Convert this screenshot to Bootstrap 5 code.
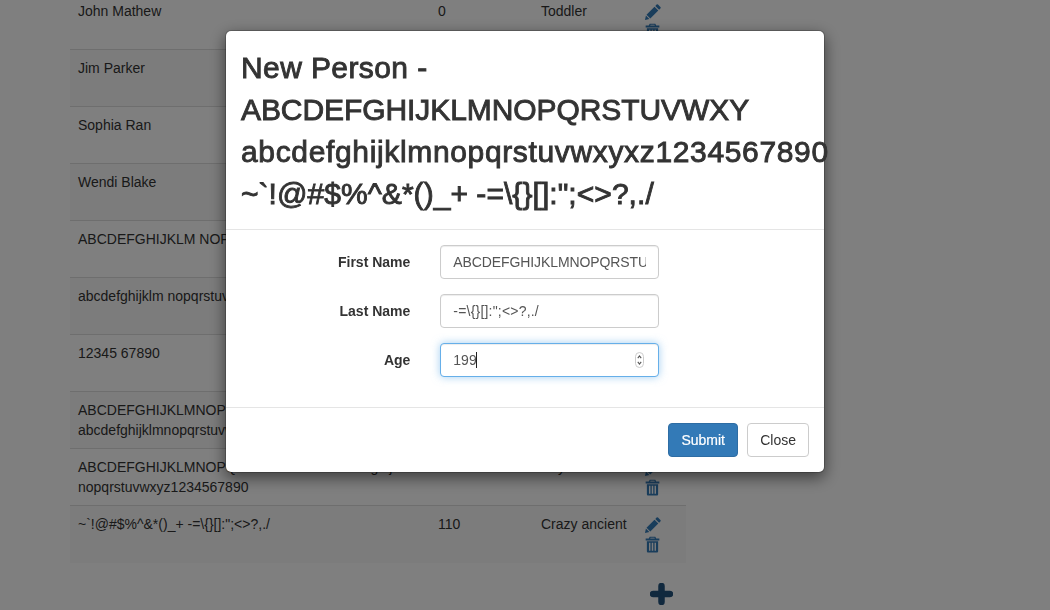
<!DOCTYPE html>
<html lang="en">
<head>
    <meta charset="UTF-8">
    <meta name="viewport" content="width=device-width, initial-scale=1.0">
    <title>People</title>
    <link href="https://cdn.jsdelivr.net/npm/bootstrap@5.3.0/dist/css/bootstrap.min.css" rel="stylesheet">
    <style>
        html, body {
            overflow: hidden;
            height: 610px;
        }
        body {
            font-family: "Liberation Sans", Arial, sans-serif;
            font-size: 14px;
            line-height: 20px;
            color: #333;
            background-color: #fff;
        }
        .people-wrap {
            width: 616px;
            margin: -8px 0 0 70px;
        }
        .people-table {
            width: 100%;
            table-layout: fixed;
            border-collapse: collapse;
        }
        .people-table td {
            padding: 8px;
            border-top: 1px solid #ddd;
            vertical-align: top;
            height: 57px;
        }
        .people-table tr:nth-child(even) td {
            background-color: #f9f9f9;
        }
        .col-name { width: 360px; }
        .col-age { width: 103px; }
        .col-kind { width: 103px; }
        .col-acts { width: 50px; }
        .act-link {
            display: block;
            height: 20px;
            padding: 3px 0 0 1px;
            color: #337ab7;
            line-height: 0;
        }
        .act-link + .act-link {
            padding-top: 2px;
        }
        .add-row {
            padding: 20px 0 0 580px;
            line-height: 0;
            color: #23527c;
        }
        .person-dialog.modal-dialog {
            width: 600px;
            max-width: 600px;
            margin: 30px auto;
        }
        .person-dialog .modal-content {
            border: 1px solid rgba(0,0,0,.2);
            border-radius: 6px;
            box-shadow: 0 5px 15px rgba(0,0,0,.5);
        }
        .person-dialog .modal-header {
            display: block;
            padding: 15px;
            border-bottom: 1px solid #e5e5e5;
        }
        .person-title {
            margin: 1px 0 -1px;
            font-family: "Liberation Sans", Arial, sans-serif;
            font-size: 30px;
            line-height: 42px;
            font-weight: 400;
            color: #333;
            -webkit-text-stroke: .9px #333;
        }
        .title-line {
            display: block;
            white-space: nowrap;
        }
        .title-line-1 { letter-spacing: .4px; }
        .title-line-2 { letter-spacing: -.08px; }
        .title-line-3 { letter-spacing: .65px; }
        .title-line-4 { letter-spacing: .05px; }
        .person-dialog .modal-body {
            padding: 15px;
        }
        .person-row {
            --bs-gutter-x: 30px;
            margin-bottom: 15px;
        }
        .person-label {
            padding-top: 7px;
            text-align: right;
            font-weight: 700;
        }
        .person-input {
            height: 34px;
            padding: 6px 12px;
            font-size: 14px;
            line-height: 20px;
            color: #555;
            border: 1px solid #ccc;
            border-radius: 4px;
            box-shadow: inset 0 1px 1px rgba(0,0,0,.075);
        }
        #firstName { letter-spacing: -.1px; }
        #lastName { letter-spacing: .2px; }
        .person-input.is-focused {
            border-color: #66afe9;
            box-shadow: inset 0 1px 1px rgba(0,0,0,.075), 0 0 8px rgba(102,175,233,.6);
            caret-color: transparent;
        }
        .age-caret {
            position: absolute;
            left: 51px;
            top: 9px;
            width: 1px;
            height: 16px;
            background-color: #222;
        }
        .age-spin {
            position: absolute;
            right: 30px;
            top: 9px;
        }
        .person-dialog .modal-footer {
            padding: 15px;
            gap: 9px;
            border-top: 1px solid #e5e5e5;
        }
        .person-dialog .modal-footer .btn {
            margin: 0;
            height: 34px;
            padding: 6px 12px;
            font-size: 14px;
            line-height: 20px;
            border-radius: 4px;
        }
        .btn-submit {
            width: 70px;
            color: #fff;
            background-color: #337ab7;
            border: 1px solid #2e6da4;
            -webkit-text-stroke: .2px #fff;
        }
        .btn-close-plain {
            color: #333;
            background-color: #fff;
            border: 1px solid #ccc;
        }
    </style>
</head>
<body>
    <!-- Table behind the dialog -->
    <div class="people-wrap">
        <table class="people-table">
            <colgroup>
                <col class="col-name"><col class="col-age"><col class="col-kind"><col class="col-acts">
            </colgroup>
            <tbody id="peopleBody"></tbody>
        </table>
        <div class="add-row">
            <svg width="23" height="22" viewBox="0 0 23 22"><path d="M11.500 3v16M3 11h17" stroke="currentColor" stroke-width="6.500" stroke-linecap="round" fill="none"/></svg>
        </div>
    </div>

    <!-- Modal -->
    <div class="modal-backdrop show"></div>
    <div class="modal show d-block" tabindex="-1">
        <div class="modal-dialog person-dialog">
            <div class="modal-content">
                <div class="modal-header">
                    <h4 class="person-title">
                        <span class="title-line title-line-1">New Person -</span>
                        <span class="title-line title-line-2">ABCDEFGHIJKLMNOPQRSTUVWXY</span>
                        <span class="title-line title-line-3">abcdefghijklmnopqrstuvwxyxz1234567890</span>
                        <span class="title-line title-line-4">~`!@#$%^&amp;*()_+ -=\{}[]:";&lt;&gt;?,./</span>
                    </h4>
                </div>
                <div class="modal-body">
                    <form>
                        <div class="row person-row">
                            <label class="col-4 person-label" for="firstName">First Name</label>
                            <div class="col-5">
                                <input type="text" class="form-control person-input" id="firstName" value="ABCDEFGHIJKLMNOPQRSTUVWXYZ">
                            </div>
                        </div>
                        <div class="row person-row">
                            <label class="col-4 person-label" for="lastName">Last Name</label>
                            <div class="col-5">
                                <input type="text" class="form-control person-input" id="lastName" value="-=\{}[]:&quot;;&lt;&gt;?,./">
                            </div>
                        </div>
                        <div class="row person-row">
                            <label class="col-4 person-label" for="age">Age</label>
                            <div class="col-5 position-relative">
                                <input type="text" class="form-control person-input is-focused" id="age" value="199">
                                <span class="age-caret" id="ageCaret"></span>
                                <svg class="age-spin" width="9" height="16" viewBox="0 0 9 16"><rect x=".5" y=".5" width="8" height="15" rx="4" fill="#fff" stroke="#ccc"/><path d="M2.800 6.200 4.500 4l1.700 2.200M2.800 9.800 4.500 12l1.700-2.200" fill="none" stroke="#555" stroke-width="1.100"/></svg>
                            </div>
                        </div>
                    </form>
                </div>
                <div class="modal-footer">
                    <button type="button" class="btn btn-submit">Submit</button>
                    <button type="button" class="btn btn-close-plain">Close</button>
                </div>
            </div>
        </div>
    </div>

    <script src="https://cdn.jsdelivr.net/npm/bootstrap@5.3.0/dist/js/bootstrap.bundle.min.js"></script>
    <script>
        const people = [
            ['John Mathew', 0, 'Toddler'],
            ['Jim Parker', 25, 'Adult'],
            ['Sophia Ran', 16, 'Teen'],
            ['Wendi Blake', 40, 'Adult'],
            ['ABCDEFGHIJKLM NOPQRSTUVWXYZ', 9, 'Child'],
            ['abcdefghijklm nopqrstuvwxyz', 9, 'Child'],
            ['12345 67890', 99, 'Old'],
            ['ABCDEFGHIJKLMNOPQRSTUVWXYZ abcdefghijklmnopqrstuvwxyz', 60, 'Senior'],
            ['ABCDEFGHIJKLMNOPQRSTUVWXYZ abcdefghijklm nopqrstuvwxyz1234567890', 5, 'Boy'],
            ['~`!@#$%^&*()_+ -=\\{}[]:";<>?,./', 110, 'Crazy ancient']
        ];

        const pencil = '<svg width="16" height="16" viewBox="0 0 16 16" fill="currentColor"><path d="M11.600.6a1 1 0 0 1 1.400 0l2.400 2.400a1 1 0 0 1 0 1.400l-1.300 1.300-3.800-3.800zM9.500 2.700l3.800 3.800-8 8-3.800-3.800z"/><path d="M.9 11.600 4.400 15.100 0 16z"/></svg>';
        const trash = '<svg width="15" height="17" viewBox="0 0 16 17" fill="currentColor" fill-rule="evenodd"><path d="M5 .3h6l1 1.900h3.300v2H.7v-2H4zM6 1.400l-.5.8h5l-.5-.8z"/><path d="M2 5h12v10.600c0 .8-.6 1.400-1.400 1.400H3.400C2.600 17 2 16.400 2 15.600zM4.300 6.500v8.600h1.500V6.500zM7.200 6.500v8.600h1.600V6.500zM10.200 6.500v8.600h1.500V6.500z"/></svg>';

        // Fill table rows
        const tbody = document.getElementById('peopleBody');
        people.forEach(person => {
            const row = document.createElement('tr');
            person.forEach(value => {
                const cell = document.createElement('td');
                cell.textContent = value;
                row.appendChild(cell);
            });
            const actions = document.createElement('td');
            actions.innerHTML = `<a class="act-link" href="#">${pencil}</a><a class="act-link" href="#">${trash}</a>`;
            row.appendChild(actions);
            tbody.appendChild(row);
        });
    </script>
</body>
</html>
